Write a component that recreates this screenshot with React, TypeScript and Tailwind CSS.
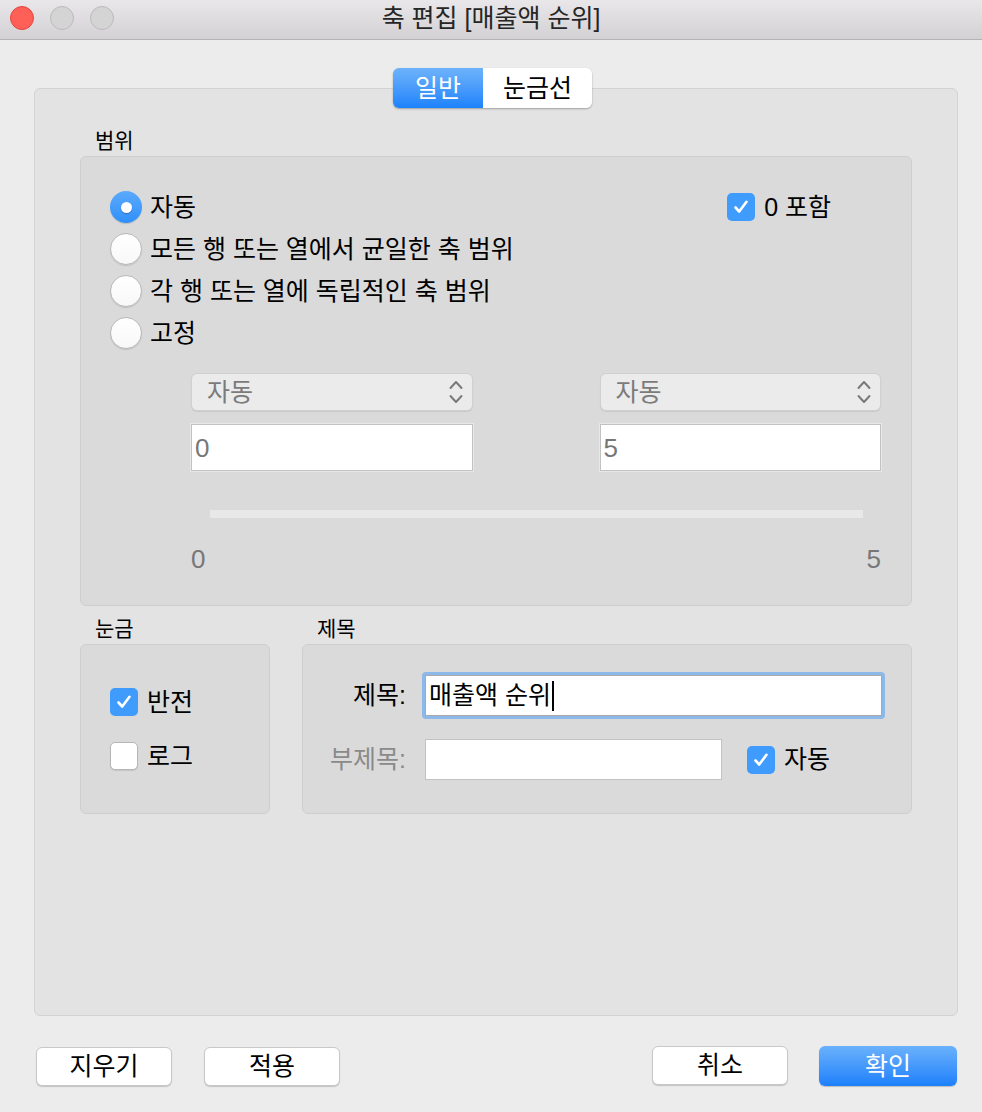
import React from "react";

const FONT = '"Liberation Sans", "Noto Sans CJK KR", sans-serif';

function Light({ color, border }: { color: string; border: string }) {
  return <div className={`w-[24px] h-[24px] rounded-full border ${color} ${border}`} />;
}

function Radio({ checked, label }: { checked?: boolean; label: string }) {
  return (
    <div className="flex items-center h-[42px]">
      {checked ? (
        <div className="w-[32px] h-[32px] rounded-full bg-gradient-to-b from-[#5aaafc] to-[#2f8ffb] flex items-center justify-center shadow-[0_1px_1px_rgba(0,0,0,0.15)]">
          <div className="w-[11px] h-[11px] rounded-full bg-white shadow-[0_1px_1px_rgba(0,0,0,0.25)]" />
        </div>
      ) : (
        <div className="w-[32px] h-[32px] rounded-full bg-gradient-to-b from-white to-[#f8f8f8] border border-[#b9b9b9] shadow-[0_1px_1px_rgba(0,0,0,0.12)]" />
      )}
      <span className="ml-[8px] text-[25px] text-black leading-none">{label}</span>
    </div>
  );
}

function Check({ checked, label, size = 28 }: { checked?: boolean; label: string; size?: number }) {
  return (
    <div className="flex items-center">
      {checked ? (
        <div
          className="rounded-[5px] bg-[#3f9bfc] flex items-center justify-center"
          style={{ width: size, height: size }}
        >
          <svg width="18" height="18" viewBox="0 0 18 18">
            <path d="M3.5 9.5 L7.2 13.5 L14.5 3.8" fill="none" stroke="white" strokeWidth="2.6" strokeLinecap="round" strokeLinejoin="round" />
          </svg>
        </div>
      ) : (
        <div
          className="rounded-[5px] bg-white border border-[#b5b5b5] shadow-[0_1px_1px_rgba(0,0,0,0.1)]"
          style={{ width: size, height: size }}
        />
      )}
      <span className="ml-[9px] text-[25px] text-black leading-none">{label}</span>
    </div>
  );
}

function Select() {
  return (
    <div className="h-[38px] rounded-[6px] bg-[#ebebeb] border border-[#d0d0d0] shadow-[0_1px_1px_rgba(0,0,0,0.08)] flex items-center justify-between pl-[15px] pr-[8px]">
      <span className="text-[25px] text-[#7b7b7b] leading-none">자동</span>
      <svg width="16" height="30" viewBox="0 0 16 30">
        <path d="M2.5 11 L8 5 L13.5 11" fill="none" stroke="#7a7a7a" strokeWidth="2" strokeLinecap="round" strokeLinejoin="round" />
        <path d="M2.5 19 L8 25 L13.5 19" fill="none" stroke="#7a7a7a" strokeWidth="2" strokeLinecap="round" strokeLinejoin="round" />
      </svg>
    </div>
  );
}

function Field({ value }: { value: string }) {
  return (
    <div className="h-[47px] bg-white border border-[#c2c2c2] outline outline-1 outline-[#e8e8e8] flex items-center px-[3px]">
      <span className="text-[26px] text-[#777] leading-none">{value}</span>
    </div>
  );
}

function Button({ label, primary }: { label: string; primary?: boolean }) {
  return primary ? (
    <div className="w-[138px] h-[40px] rounded-[6px] bg-gradient-to-b from-[#69b1fb] to-[#1a80fb] flex items-center justify-center shadow-[0_1px_1px_rgba(0,0,0,0.2)]">
      <span className="text-[25px] text-white leading-none">{label}</span>
    </div>
  ) : (
    <div className="w-[136px] h-[39px] rounded-[6px] bg-white border border-[#c8c8c8] shadow-[0_1px_1px_rgba(0,0,0,0.18)] flex items-center justify-center">
      <span className="text-[25px] text-black leading-none">{label}</span>
    </div>
  );
}

export default function App() {
  return (
    <div className="w-[982px] h-[1112px] bg-[#ececec] flex flex-col overflow-hidden" style={{ fontFamily: FONT }}>
      {/* title bar */}
      <div className="h-[40px] shrink-0 grid grid-cols-[1fr_auto_1fr] items-center bg-gradient-to-b from-[#e9e7e9] to-[#d3d1d3] border-b border-[#b3b3b3]">
        <div className="flex items-center gap-[16px] pl-[10px] -mt-[3px]">
          <Light color="bg-[#fe5f57]" border="border-[#e2463f]" />
          <Light color="bg-[#d5d4d5]" border="border-[#bcbbbc]" />
          <Light color="bg-[#d5d4d5]" border="border-[#bcbbbc]" />
        </div>
        <div className="text-[25px] leading-none text-[#262626] -mt-[3px]">축 편집 [매출액 순위]</div>
        <div />
      </div>

      {/* tabbed body */}
      <div className="flex flex-col pl-[34px] pr-[24px] pt-[28px]">
        <div className="flex justify-center relative z-10 pr-[7px]">
          <div className="flex h-[40px] rounded-[6px] shadow-[0_1px_2px_rgba(0,0,0,0.3)] overflow-hidden">
            <div className="w-[90px] bg-gradient-to-b from-[#6db3fa] to-[#1b82fb] flex items-center justify-center">
              <span className="text-[25px] text-white leading-none">일반</span>
            </div>
            <div className="w-[109px] bg-white flex items-center justify-center">
              <span className="text-[25px] text-black leading-none">눈금선</span>
            </div>
          </div>
        </div>

        <div className="-mt-[20px] h-[928px] bg-[#e3e3e3] border border-[#d3d3d3] rounded-[6px] px-[45px] pt-[35px] flex flex-col">
          {/* range */}
          <div className="h-[32px] flex items-center pl-[15px] text-[21px] leading-none text-black">범위</div>
          <div className="h-[450px] bg-[#dadada] border border-[#cecece] rounded-[6px] flex flex-col pt-[29px]">
            <div className="flex justify-between pl-[29px] pr-[80px]">
              <div className="flex flex-col">
                <Radio checked label="자동" />
                <Radio label="모든 행 또는 열에서 균일한 축 범위" />
                <Radio label="각 행 또는 열에 독립적인 축 범위" />
                <Radio label="고정" />
              </div>
              <div className="pt-[7px]">
                <Check checked label="0 포함" />
              </div>
            </div>

            <div className="flex gap-[127px] pl-[110px] pr-[30px] mt-[19px]">
              <div className="flex-1 flex flex-col gap-[13px]">
                <Select />
                <Field value="0" />
              </div>
              <div className="flex-1 flex flex-col gap-[13px]">
                <Select />
                <Field value="5" />
              </div>
            </div>

            <div className="pl-[129px] pr-[48px] mt-[39px]">
              <div className="h-[8px] bg-[#e8e8e8]" />
            </div>

            <div className="flex justify-between pl-[110px] pr-[30px] mt-[28px]">
              <span className="text-[26px] text-[#777] leading-none">0</span>
              <span className="text-[26px] text-[#777] leading-none">5</span>
            </div>
          </div>

          {/* scale + title */}
          <div className="flex gap-[32px] mt-[6px]">
            <div className="w-[190px] flex flex-col">
              <div className="h-[32px] flex items-center pl-[15px] text-[21px] leading-none text-black">눈금</div>
              <div className="h-[170px] bg-[#dadada] border border-[#cecece] rounded-[6px] flex flex-col pl-[29px] pt-[43px] gap-[26px]">
                <Check checked label="반전" />
                <Check label="로그" />
              </div>
            </div>
            <div className="flex-1 flex flex-col">
              <div className="h-[32px] flex items-center pl-[15px] text-[21px] leading-none text-black">제목</div>
              <div className="h-[170px] bg-[#dadada] border border-[#cecece] rounded-[6px] flex flex-col pt-[27px] pr-[26px]">
                <div className="flex items-center">
                  <span className="w-[103px] text-right text-[25px] text-black leading-none">제목:</span>
                  <div className="ml-[16px] flex-1 h-[47px] rounded-[4px] bg-[#8cb8ea] p-[3px]">
                    <div className="h-full bg-white border border-[#a9a9a9] flex items-center pl-[3px]">
                      <span className="text-[25px] text-black leading-none">매출액 순위</span>
                      <span className="w-[2px] h-[30px] bg-black ml-[1px]" />
                    </div>
                  </div>
                </div>
                <div className="flex items-center mt-[20px]">
                  <span className="w-[103px] text-right text-[25px] text-[#8a8a8a] leading-none">부제목:</span>
                  <div className="ml-[19px] w-[297px] h-[41px] bg-white border border-[#c2c2c2]" />
                  <div className="ml-[25px]">
                    <Check checked label="자동" />
                  </div>
                </div>
              </div>
            </div>
          </div>
        </div>
      </div>

      {/* footer buttons */}
      <div className="flex items-center justify-between px-[25px] mt-[30px]">
        <div className="flex gap-[32px] pl-[11px]">
          <Button label="지우기" />
          <Button label="적용" />
        </div>
        <div className="flex gap-[31px]">
          <Button label="취소" />
          <Button label="확인" primary />
        </div>
      </div>
    </div>
  );
}
